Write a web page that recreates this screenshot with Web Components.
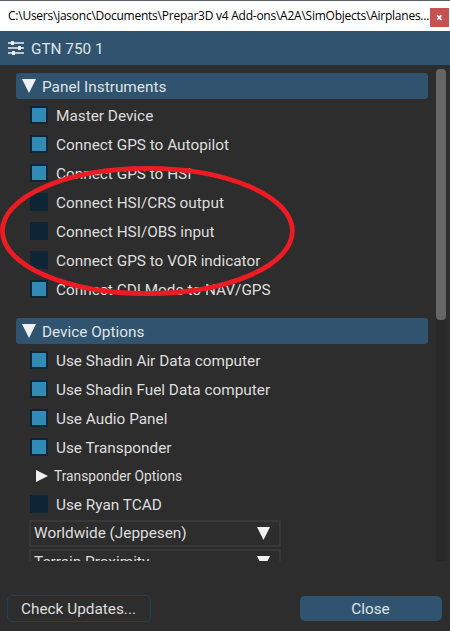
<!DOCTYPE html>
<html lang="en"><head><meta charset="utf-8"><title>GTN 750</title>
<style>
html,body{margin:0;height:100%;overflow:hidden;background:#2d2d2d}
</style></head><body>
<gtn-window></gtn-window>
<script>
const define=(name,html)=>customElements.define(name,class extends HTMLElement{
  connectedCallback(){
    if(this.shadowRoot)return;
    const t=document.createElement('template');t.innerHTML=html;
    this.attachShadow({mode:'open'}).append(t.content.cloneNode(true));
  }
});

define('title-bar',`<style>
:host{display:flex;box-sizing:border-box;height:31px;background:#fff;border-top:1px solid #5b6069;color:#000;font:12px/30px "Open Sans","Noto Sans",sans-serif;white-space:nowrap;justify-content:space-between}
span{padding-left:8px;letter-spacing:-.245px}
button{all:unset;flex:none;box-sizing:border-box;width:19px;height:19px;margin:7px 1px 0 0;background:#c75050;display:grid;place-items:center}
svg{display:block}
</style><span><slot></slot></span><button aria-label="close"><svg width="7" height="7" viewBox="0 0 7 7"><path d="M1.2 1.2L5.4 6M5.4 1.2L1.2 6" stroke="#fff" stroke-width="1.7"/></svg></button>`);

define('app-header',`<style>
:host{display:flex;align-items:center;height:34px;background:#30536f;padding-left:8px;gap:7px;color:#dfe3e6}
span{padding-top:1px}
</style><svg width="16" height="14" viewBox="0 0 16 14" fill="#efefef"><path d="M0 1.3h16v1.4H0zM0 6.3h16v1.4H0zM0 11.3h16v1.4H0z"/><rect x="3" y="0" width="3" height="4" rx=".5"/><rect x="10" y="5" width="3" height="4" rx=".5"/><rect x="4" y="10" width="3" height="4" rx=".5"/></svg><span><slot></slot></span>`);

define('tree-section',`<style>
:host{display:block}
header{display:flex;align-items:center;height:26px;width:412px;box-sizing:border-box;padding-left:6px;gap:6px;background:#30536f;border-radius:3px;color:#dfe3e6}
header span{padding-top:2px}
.rows{padding:7px 0 0 13px;display:flex;flex-direction:column;align-items:flex-start}
</style><header><svg width="14" height="14" viewBox="0 0 14 14"><path d="M0 0h14L7 14z" fill="#f0f0f0"/></svg><span><slot name="title"></slot></span></header><div class="rows"><slot></slot></div>`);

define('check-row',`<style>
:host{display:flex;align-items:center;height:18px;gap:8px;margin:0 0 11px 1px;white-space:nowrap;line-height:18px}
span{padding-top:2px}
i{width:18px;height:18px;box-sizing:border-box;background:#0d2535;border:2px solid #0d2535}
:host([checked]) i{background:#318bb7}
</style><i></i><span><slot></slot></span>`);

define('sub-tree',`<style>
:host{display:flex;align-items:center;gap:6px;height:18px;margin:0 0 10px 7px;font-size:13.75px}
svg{display:block}
</style><svg width="12" height="12" viewBox="0 0 12 12"><path d="M0 0L12 6L0 12z" fill="#f0f0f0"/></svg><span><slot></slot></span>`);

define('combo-box',`<style>
:host{display:flex;box-sizing:border-box;align-items:center;justify-content:space-between;width:252px;height:27px;border:2px solid #383838;padding:0 9px 0 3px;margin-bottom:2px;line-height:23px}
</style><span><slot></slot></span><svg width="13" height="13" viewBox="0 0 13 13"><path d="M0 0h13L6.5 13z" fill="#f0f0f0"/></svg>`);

define('scroll-bar',`<style>
:host{display:block;width:10px;background:#282828;border-radius:5px 5px 0 0}
div{height:251px;border-radius:4px;background:#666}
</style><div></div>`);

define('action-button',`<style>
:host{display:block;box-sizing:border-box}
button{all:unset;box-sizing:border-box;width:100%;height:100%;text-align:center;border-radius:5px;display:block}
:host([kind=outline]){width:144px;height:27px}
:host([kind=outline]) button{border:1px solid #1d415a;line-height:26px;padding-right:1px}
:host([kind=solid]){width:142px;height:25px}
:host([kind=solid]) button{background:#30536f;line-height:26px;color:#dfe3e6;padding-right:1px}
</style><button><slot></slot></button>`);

define('highlight-ring',`<style>
:host{position:absolute;left:0;top:166px;width:295px;height:130px;pointer-events:none}
svg{display:block}
</style><svg width="295" height="130" viewBox="0 0 295 130"><ellipse cx="147.4" cy="65" rx="145" ry="62.6" fill="none" stroke="#ed1c24" stroke-width="4.8"/></svg>`);

define('gtn-window',`<style>
:host{display:flex;flex-direction:column;position:relative;width:450px;height:631px;overflow:hidden;background:#2d2d2d;color:#dedede;font:15.35px/20px Roboto,sans-serif}
main{display:flex;justify-content:space-between;height:492px;padding:4px 4px 0 16px}
.view{height:488px;padding-top:4px;overflow:hidden;width:412px}
tree-section+tree-section{margin-top:9px}
footer{display:flex;justify-content:space-between;align-items:flex-start;padding:34px 8px 0 7px}
</style>
<title-bar>C:\\Users\\jasonc\\Documents\\Prepar3D v4 Add-ons\\A2A\\SimObjects\\Airplanes...</title-bar>
<app-header>GTN 750 1</app-header>
<main><div class="view">
<tree-section><span slot="title">Panel Instruments</span>
<check-row checked>Master Device</check-row><check-row checked>Connect GPS to Autopilot</check-row><check-row checked>Connect GPS to HSI</check-row><check-row>Connect HSI/CRS output</check-row><check-row>Connect HSI/OBS input</check-row><check-row>Connect GPS to VOR indicator</check-row><check-row checked>Connect CDI Mode to NAV/GPS</check-row></tree-section>
<tree-section><span slot="title">Device Options</span>
<check-row checked>Use Shadin Air Data computer</check-row><check-row checked>Use Shadin Fuel Data computer</check-row><check-row checked>Use Audio Panel</check-row><check-row checked>Use Transponder</check-row><sub-tree>Transponder Options</sub-tree><check-row style="margin-bottom:7px">Use Ryan TCAD</check-row><combo-box>Worldwide (Jeppesen)</combo-box><combo-box>Terrain Proximity</combo-box></tree-section>
</div><scroll-bar></scroll-bar></main>
<footer><action-button kind="outline">Check Updates...</action-button><action-button kind="solid" style="margin-top:1px">Close</action-button></footer>
<highlight-ring></highlight-ring>`);
</script></body></html>
